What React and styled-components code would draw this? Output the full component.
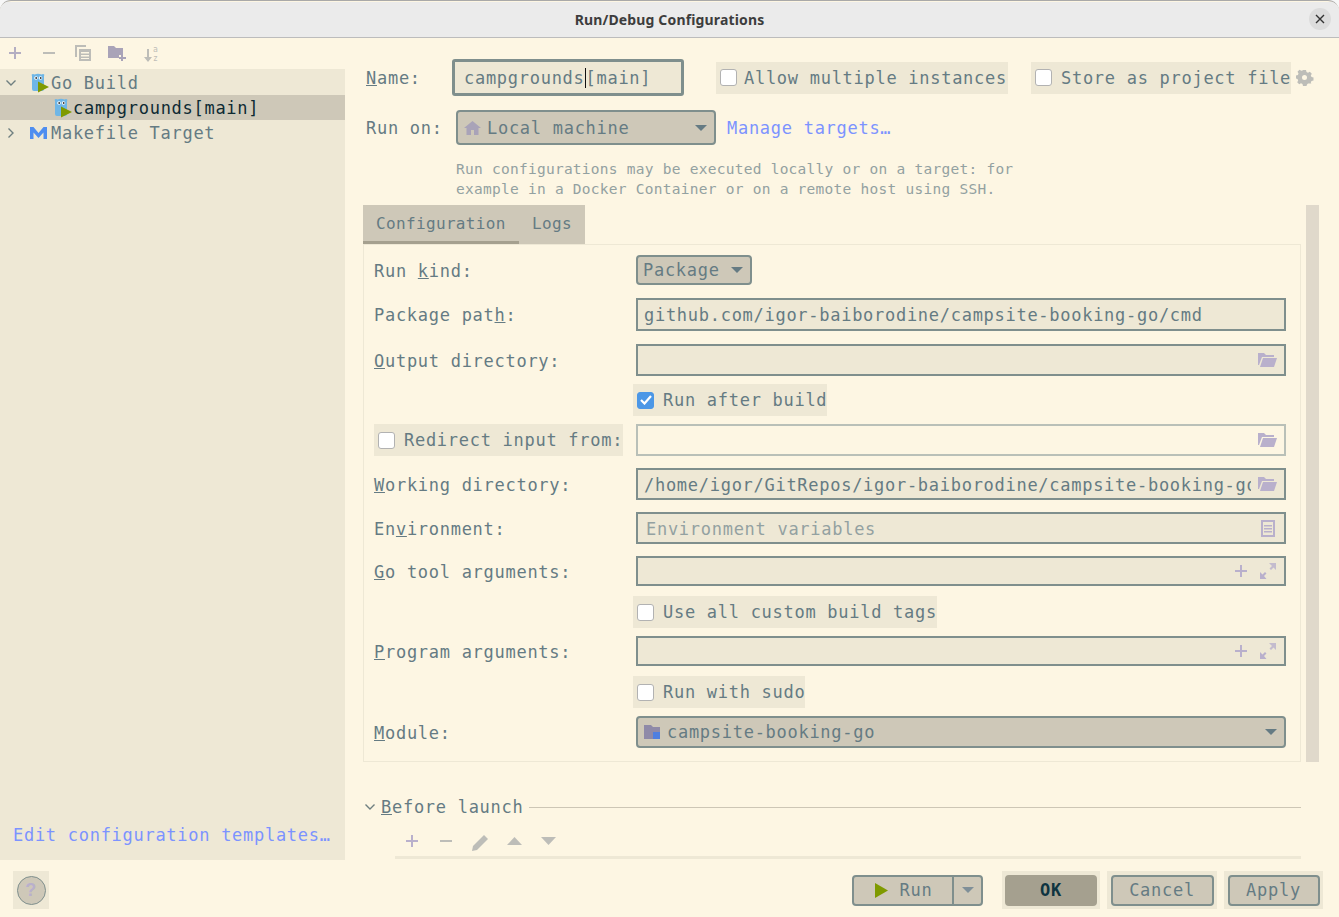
import styled, { createGlobalStyle } from "styled-components";

const BASE = "#fdf6e3";
const ALT = "#eee8d5";
const PICK = "#cec8b8";
const TEXT = "#657b83";
const EDGE = "#7f8f8d";
const LINK = "#7c93ff";
const ICON = "#b9b0cc";
const GREY = "#bdbdb8";

const Global = createGlobalStyle`
  html, body { margin: 0; padding: 0; height: 100%; overflow: hidden; background: #f7f7f7; }
  * { box-sizing: border-box; }
  #root { height: 100%; }
`;

const Window = styled.div`
  width: 1339px;
  height: 917px;
  padding-top: 1px;
  display: flex;
  flex-direction: column;
  font-family: "DejaVu Sans Mono", "Liberation Mono", monospace;
  font-size: 17px;
  letter-spacing: 0.72px;
  color: ${TEXT};
  background: ${BASE};
  border-radius: 11px 11px 0 0;
  overflow: hidden;
  border-top: 1px solid #a9a9a9;
`;

const TitleBar = styled.header`
  flex: 0 0 36px;
  display: flex;
  align-items: center;
  justify-content: center;
  position: relative;
  background: #ebebeb;
  border-bottom: 1px solid #bcbcbc;
  font: bold 14px "Noto Sans", sans-serif;
  letter-spacing: 0.15px;
  color: #3d3d3d;
`;

const CloseButton = styled.button`
  position: absolute;
  right: 8px;
  top: 6px;
  width: 22px;
  height: 22px;
  padding: 0;
  border: 0;
  border-radius: 50%;
  background: #dcdcdc;
  display: flex;
  align-items: center;
  justify-content: center;
`;

const Body = styled.div`
  flex: 1;
  display: flex;
  min-height: 0;
`;

const Sidebar = styled.aside`
  flex: 0 0 345px;
  display: flex;
  flex-direction: column;
`;

const SideTools = styled.div`
  flex: 0 0 31px;
  display: flex;
  align-items: center;
  margin-left: -2px;
  padding-bottom: 1px;
`;

const IconSlot = styled.span`
  flex: 0 0 34px;
  display: flex;
  align-items: center;
  justify-content: center;
  padding-top: ${(p) => p.$top || 0}px;
`;

const Tree = styled.div`
  flex: 1;
  background: ${ALT};
  display: flex;
  flex-direction: column;
  padding-top: 1px;
`;

const TreeRow = styled.div`
  height: 25px;
  display: flex;
  align-items: center;
  padding-left: ${(p) => p.$indent}px;
  background: ${(p) => (p.$selected ? PICK : "transparent")};
  color: ${(p) => (p.$selected ? "#0d2a33" : TEXT)};
  font-weight: ${(p) => (p.$selected ? 400 : 500)};
  white-space: nowrap;
`;

const TreeGap = styled.span`
  display: inline-flex;
  margin-left: ${(p) => p.$left || 0}px;
  margin-right: ${(p) => p.$right || 0}px;
`;

const TemplatesLink = styled.a`
  margin: auto 0 15px 13px;
  color: ${LINK};
`;

const Main = styled.main`
  flex: 1;
  min-width: 0;
  padding: 21px 0 0 18px;
  display: flex;
  flex-direction: column;
`;

const HeadRow = styled.div`
  display: flex;
  align-items: center;
  height: ${(p) => p.$h}px;
  margin-top: ${(p) => p.$mt || 0}px;
`;

const HeadLabel = styled.label`
  flex: 0 0 ${(p) => p.$w}px;
  padding-left: 3px;
  white-space: nowrap;
`;

const NameField = styled.div`
  width: 232px;
  height: 37px;
  margin-left: -1px;
  border: 3px solid ${EDGE};
  border-radius: 3px;
  background: ${ALT};
  display: flex;
  align-items: center;
  padding-left: 9px;
  white-space: nowrap;
`;

const Caret = styled.span`
  display: inline-block;
  width: 0;
  height: 20px;
  border-left: 1px solid #111;
  vertical-align: middle;
`;

const CheckWrap = styled.label`
  display: flex;
  align-items: center;
  height: ${(p) => p.$h || 32}px;
  width: ${(p) => p.$w}px;
  margin-left: ${(p) => p.$ml || 0}px;
  padding-left: 4px;
  flex: 0 0 auto;
  background: ${ALT};
  white-space: nowrap;
`;

const Box = styled.span`
  flex: 0 0 17px;
  width: 17px;
  height: 17px;
  margin-right: ${(p) => p.$gap || 9}px;
  border-radius: 3px;
  display: flex;
  align-items: center;
  justify-content: center;
  background: ${(p) => (p.$on ? "#4c97e6" : "#fff")};
  border: 1px solid ${(p) => (p.$on ? "#4c97e6" : "#b2b2b2")};
`;

const ComboBox = styled.div`
  height: ${(p) => p.$h}px;
  width: ${(p) => p.$w};
  flex: ${(p) => (p.$w === "auto" ? 1 : "0 0 auto")};
  display: flex;
  align-items: center;
  padding: 0 7px 0 ${(p) => p.$pl || 6}px;
  background: ${PICK};
  border: 2px solid ${EDGE};
  border-radius: 4px;
  white-space: nowrap;
`;

const ComboText = styled.span`
  flex: 1;
  display: flex;
  align-items: center;
  gap: ${(p) => p.$gap || 0}px;
`;

const Arrow = styled.span`
  width: 0;
  height: 0;
  border-left: 6px solid transparent;
  border-right: 6px solid transparent;
  border-top: 6px solid ${(p) => p.$c || TEXT};
`;

const Link = styled.a`
  margin-left: 11px;
  color: ${LINK};
  white-space: nowrap;
`;

const Hint = styled.p`
  margin: 14px 0 6px 93px;
  font-size: 14.5px;
  letter-spacing: 0.26px;
  line-height: 20px;
  color: #93a1a1;
`;

const ConfigArea = styled.div`
  display: flex;
  align-items: stretch;
  height: 557px;
  padding-right: 20px;
`;

const ConfigColumn = styled.div`
  flex: 1;
  min-width: 0;
  display: flex;
  flex-direction: column;
`;

const Scrollbar = styled.div`
  flex: 0 0 13px;
  margin-left: 5px;
  background: #e0d9cb;
`;

const TabBar = styled.div`
  display: flex;
  flex: 0 0 39px;
  width: 222px;
  background: ${PICK};
`;

const Tab = styled.div`
  padding: 0 13px;
  width: ${(p) => p.$w}px;
  display: flex;
  align-items: center;
  font-size: 16px;
  letter-spacing: 0.35px;
  border-bottom: 3px solid ${(p) => (p.$active ? "#a5a08f" : "transparent")};
`;

const Panel = styled.section`
  height: 518px;
  min-width: 0;
  border: 1px solid ${ALT};
  padding: 0 14px 0 10px;
`;

const FormRow = styled.div`
  display: flex;
  align-items: center;
  margin-top: ${(p) => p.$mt}px;
  height: ${(p) => p.$h}px;
`;

const FieldLabel = styled.label`
  flex: 0 0 262px;
  padding-top: 1px;
  white-space: nowrap;
`;

const Field = styled.div`
  flex: 1;
  height: ${(p) => p.$h || 32}px;
  min-width: 0;
  margin-left: ${(p) => p.$ml || 0}px;
  display: flex;
  align-items: center;
  gap: ${(p) => p.$gap || 12}px;
  padding: 0 ${(p) => p.$pr || 8}px 0 6px;
  background: ${(p) => (p.$off ? BASE : ALT)};
  border: 2px solid ${(p) => (p.$off ? "#b9c0b8" : EDGE)};
  white-space: nowrap;
`;

const FieldText = styled.span`
  flex: 1;
  min-width: 0;
  overflow: hidden;
  padding-top: 1px;
  padding-left: ${(p) => p.$pl || 0}px;
  color: ${(p) => (p.$muted ? "#93a1a1" : TEXT)};
`;

const Before = styled.div`
  display: flex;
  align-items: center;
  margin: 34px 38px 0 0;
  height: 22px;
`;

const BeforeRule = styled.span`
  flex: 1;
  height: 1px;
  margin-left: 6px;
  background: #cdc6b5;
`;

const BeforeTools = styled.div`
  margin: 10px 38px 0 32px;
  height: 31px;
  padding-top: 6px;
  display: flex;
  align-items: flex-start;
  border-bottom: 3px solid ${ALT};
`;

const Footer = styled.footer`
  flex: 0 0 57px;
  display: flex;
  align-items: center;
  padding: 3px 16px 0 13px;
`;

const HelpWrap = styled.div`
  width: 36px;
  height: 38px;
  background: ${ALT};
  display: flex;
  align-items: center;
  justify-content: center;
  margin-right: auto;
`;

const Help = styled.span`
  width: 29px;
  height: 29px;
  border-radius: 50%;
  border: 1px solid ${EDGE};
  background: ${PICK};
  color: ${ICON};
  display: flex;
  align-items: center;
  justify-content: center;
  font: bold 18px "Liberation Sans", sans-serif;
`;

const SplitButton = styled.div`
  display: flex;
  width: 131px;
  height: 31px;
  margin-right: 19px;
  border: 2px solid ${EDGE};
  border-radius: 4px;
  background: ${PICK};
`;

const SplitMain = styled.span`
  flex: 1;
  display: flex;
  align-items: center;
  justify-content: center;
  gap: 12px;
  border-right: 2px solid ${EDGE};
`;

const SplitSide = styled.span`
  flex: 0 0 27px;
  display: flex;
  align-items: center;
  justify-content: center;
`;

const ButtonWrap = styled.div`
  height: 38px;
  width: ${(p) => p.$w}px;
  margin-left: ${(p) => p.$ml || 0}px;
  background: ${ALT};
  display: flex;
  align-items: center;
  justify-content: center;
`;

const Button = styled.button`
  width: ${(p) => p.$w}px;
  height: 31px;
  padding: 0;
  font: inherit;
  letter-spacing: inherit;
  font-weight: ${(p) => (p.$primary ? 700 : 400)};
  color: ${(p) => (p.$primary ? "#0e3440" : TEXT)};
  background: ${(p) => (p.$primary ? "#a5a08f" : PICK)};
  border: 2px solid ${(p) => (p.$primary ? "#a5a08f" : EDGE)};
  border-radius: 4px;
`;

const Gopher = () => (
  <svg width="18" height="20" viewBox="0 0 18 20">
    <path d="M1 3 Q0 1 2 1 L3.500 1.600 Q7 0 10.500 1.600 L12 1 Q14 1 13 3 V16 Q13 18 11 18 H3 Q1 18 1 16Z" fill="#6fb6e6" />
    <circle cx="5" cy="5" r="1.800" fill="#fff" />
    <circle cx="9.500" cy="5" r="1.800" fill="#fff" />
    <circle cx="5.200" cy="5" r=".9" fill="#333" />
    <circle cx="9.700" cy="5" r=".9" fill="#333" />
    <path d="M7 8.500 L18 14 L7 19.500Z" fill="#7f9a00" />
  </svg>
);

const MakeIcon = () => (
  <svg width="17" height="14" viewBox="0 0 17 14">
    <path d="M0 13V1h3.500l5 6 5-6H17v12h-3.500V6.500L8.500 12 3.500 6.500V13Z" fill="#4f8ef0" />
  </svg>
);

const Chevron = ({ open }) => (
  <svg width="12" height="12" viewBox="0 0 12 12" fill="none" stroke="#6f7f80" strokeWidth="1.400">
    <path d={open ? "M1.500 3.500 6 8l4.500-4.500" : "M3.500 1.500 8 6l-4.500 4.500"} />
  </svg>
);

const PlusIcon = ({ c = ICON, size = 14 }) => (
  <svg width={size} height={size} viewBox="0 0 14 14" fill={c}>
    <path d="M6 1h2v5h5v2H8v5H6V8H1V6h5Z" />
  </svg>
);

const MinusIcon = ({ c = GREY }) => (
  <svg width="14" height="14" viewBox="0 0 14 14" fill={c}>
    <path d="M1 6h12v2H1Z" />
  </svg>
);

const CopyIcon = () => (
  <svg width="16" height="16" viewBox="0 0 16 16" fill={GREY}>
    <path d="M0 0h11v2H2v10H0Z" />
    <path d="M4 4h12v12H4Zm2 3v1.500h8V7Zm0 3v1.500h8V10Zm0 3v1h8v-1Z" fillRule="evenodd" />
  </svg>
);

const FolderPlus = () => (
  <svg width="18" height="16" viewBox="0 0 18 16" fill="#a9a3b8">
    <path d="M0 1h6l2 2h7v7h-4v3H0Z" />
    <path d="M13 9h2v3h3v2h-3v2h-2v-2h-2v-2h2Z" />
  </svg>
);

const SortIcon = () => (
  <svg width="17" height="17" viewBox="0 0 17 17" fill={GREY}>
    <path d="M4 4h2v8h3l-4 5-4-5h3Z" />
    <text x="10" y="7" fontSize="8" fontFamily="DejaVu Sans Mono" letterSpacing="0">a</text>
    <text x="10" y="16" fontSize="8" fontFamily="DejaVu Sans Mono" letterSpacing="0">z</text>
  </svg>
);

const Gear = () => (
  <svg width="18" height="18" viewBox="0 0 18 18" fill={GREY}>
    <path
      fillRule="evenodd"
      d="M7 1h3l.5 2 1.500.7 1.800-1 2 2-1 1.800.7 1.500 2 .5v3l-2 .5-.7 1.500.5 1H12l-1 1-.500 1.500H7l-.5-2-1.500-.7-1.800 1-2-2 1-1.800L1.500 10l-1.500-.5v-3l2-.5.500-1.500-1-1.800 2-2 1.800 1L6.500 1.500ZM8.500 6a2.500 2.500 0 1 0 0 5 2.500 2.500 0 0 0 0-5Z"
    />
  </svg>
);

const HomeIcon = () => (
  <svg width="17" height="14" viewBox="0 0 17 14" fill="#a9a3b8">
    <path d="M8.500 0 17 7h-2.500v7H10V9H7v5H2.500V7H0Z" />
  </svg>
);

const FolderOpen = () => (
  <svg width="19" height="14" viewBox="0 0 19 14" fill={ICON}>
    <path d="M0 0h6l2 2h8v2H4L1 12H0Z" />
    <path d="M5 5h14l-3 9H2Z" />
  </svg>
);

const DocIcon = () => (
  <svg width="14" height="17" viewBox="0 0 14 17" fill={ICON}>
    <path fillRule="evenodd" d="M0 0h14v17H0Zm2 2v13h10V2Zm1 3h8v1.500H3Zm0 3h8v1.500H3Zm0 3h8v1.500H3Z" />
  </svg>
);

const ExpandIcon = () => (
  <svg width="16" height="16" viewBox="0 0 16 16" fill={ICON}>
    <path d="M9 0h7v7l-2.500-2.500L11 7 9.500 5.500 12 3Z" opacity=".8" />
    <path d="M0 16V9l2.500 2.500L5 9l1.500 1.500L4 13l2.500 3Z" />
  </svg>
);

const ModuleIcon = () => (
  <svg width="19" height="16" viewBox="0 0 19 16">
    <path d="M0 1h7l2 2h7v12H0Z" fill="#8f8aa8" />
    <path d="M9 8h7v7H9Z" fill="#4f7fe0" />
  </svg>
);

const PencilIcon = () => (
  <svg width="18" height="18" viewBox="0 0 18 18" fill={GREY}>
    <path d="M13 1l4 4L6 16l-5 1 1-5Z" />
  </svg>
);

const Triangle = ({ up }) => (
  <svg width="15" height="8" viewBox="0 0 15 8" fill={GREY}>
    <path d={up ? "M7.500 0 15 8H0Z" : "M0 0h15L7.500 8Z"} />
  </svg>
);

const App = () => (
  <>
    <Global />
    <Window>
      <TitleBar>
        Run/Debug Configurations
        <CloseButton aria-label="Close">
          <svg width="10" height="10" viewBox="0 0 10 10" stroke="#333" strokeWidth="1.400">
            <path d="M1 1l8 8M9 1 1 9" />
          </svg>
        </CloseButton>
      </TitleBar>
      <Body>
        <Sidebar>
          <SideTools>
            <IconSlot><PlusIcon c="#b4aec2" /></IconSlot>
            <IconSlot><MinusIcon /></IconSlot>
            <IconSlot><CopyIcon /></IconSlot>
            <IconSlot><FolderPlus /></IconSlot>
            <IconSlot><SortIcon /></IconSlot>
          </SideTools>
          <Tree>
            <TreeRow $indent={5}>
              <TreeGap $right={14}><Chevron open /></TreeGap>
              <TreeGap $right={2}><Gopher /></TreeGap>
              Go Build
            </TreeRow>
            <TreeRow $indent={54} $selected>
              <TreeGap $right={1}><Gopher /></TreeGap>
              campgrounds[main]
            </TreeRow>
            <TreeRow $indent={5}>
              <TreeGap $right={13}><Chevron /></TreeGap>
              <TreeGap $right={4}><MakeIcon /></TreeGap>
              Makefile Target
            </TreeRow>
            <TemplatesLink>Edit configuration templates…</TemplatesLink>
          </Tree>
        </Sidebar>

        <Main>
          <HeadRow $h={37}>
            <HeadLabel $w={90}><u>N</u>ame:</HeadLabel>
            <NameField>
              campgrounds<Caret />[main]
            </NameField>
            <CheckWrap $w={292} $ml={32}>
              <Box $gap={7} />
              Allow multiple instances
            </CheckWrap>
            <CheckWrap $w={260} $ml={23}>
              <Box />
              Store as project file
            </CheckWrap>
            <TreeGap $left={5}><Gear /></TreeGap>
          </HeadRow>
          <HeadRow $h={35} $mt={14}>
            <HeadLabel $w={93}>Run on:</HeadLabel>
            <ComboBox $h={35} $w="260px" $pl={6}>
              <ComboText $gap={6}><HomeIcon />Local machine</ComboText>
              <Arrow />
            </ComboBox>
            <Link>Manage targets…</Link>
          </HeadRow>
          <Hint>
            Run configurations may be executed locally or on a target: for
            <br />
            example in a Docker Container or on a remote host using SSH.
          </Hint>

          <ConfigArea>
            <ConfigColumn>
              <TabBar>
                <Tab $w={156} $active>Configuration</Tab>
                <Tab $w={66}>Logs</Tab>
              </TabBar>
              <Panel>
                <FormRow $h={30} $mt={10}>
                  <FieldLabel>Run <u>k</u>ind:</FieldLabel>
                  <ComboBox $h={30} $w="116px" $pl={5}>
                    <ComboText>Package</ComboText>
                    <Arrow />
                  </ComboBox>
                </FormRow>
                <FormRow $h={33} $mt={13}>
                  <FieldLabel>Package pat<u>h</u>:</FieldLabel>
                  <Field $h={33}><FieldText>github.com/igor-baiborodine/campsite-booking-go/cmd</FieldText></Field>
                </FormRow>
                <FormRow $h={32} $mt={13}>
                  <FieldLabel><u>O</u>utput directory:</FieldLabel>
                  <Field $pr={7}><FieldText /><FolderOpen /></Field>
                </FormRow>
                <FormRow $h={32} $mt={8}>
                  <CheckWrap $w={194} $ml={259}>
                    <Box $on>
                      <svg width="12" height="10" viewBox="0 0 12 10" fill="none" stroke="#fff" strokeWidth="2.200">
                        <path d="M1 5l3.500 3.500L11 1" />
                      </svg>
                    </Box>
                    Run after build
                  </CheckWrap>
                </FormRow>
                <FormRow $h={32} $mt={8}>
                  <CheckWrap $w={249}>
                    <Box />
                    Redirect input from:
                  </CheckWrap>
                  <Field $off $ml={13} $pr={7}><FieldText /><FolderOpen /></Field>
                </FormRow>
                <FormRow $h={32} $mt={12}>
                  <FieldLabel><u>W</u>orking directory:</FieldLabel>
                  <Field $pr={7} $gap={7}><FieldText>/home/igor/GitRepos/igor-baiborodine/campsite-booking-go</FieldText><FolderOpen /></Field>
                </FormRow>
                <FormRow $h={32} $mt={12}>
                  <FieldLabel>En<u>v</u>ironment:</FieldLabel>
                  <Field $pr={9}><FieldText $muted $pl={2}>Environment variables</FieldText><DocIcon /></Field>
                </FormRow>
                <FormRow $h={30} $mt={12}>
                  <FieldLabel><u>G</u>o tool arguments:</FieldLabel>
                  <Field $h={30}><FieldText /><PlusIcon /><ExpandIcon /></Field>
                </FormRow>
                <FormRow $h={32} $mt={10}>
                  <CheckWrap $w={304} $ml={259}>
                    <Box />
                    Use all custom build tags
                  </CheckWrap>
                </FormRow>
                <FormRow $h={30} $mt={8}>
                  <FieldLabel><u>P</u>rogram arguments:</FieldLabel>
                  <Field $h={30}><FieldText /><PlusIcon /><ExpandIcon /></Field>
                </FormRow>
                <FormRow $h={32} $mt={10}>
                  <CheckWrap $w={172} $ml={259}>
                    <Box />
                    Run with sudo
                  </CheckWrap>
                </FormRow>
                <FormRow $h={32} $mt={8}>
                  <FieldLabel><u>M</u>odule:</FieldLabel>
                  <ComboBox $h={32} $w="auto" $pl={6}>
                    <ComboText $gap={4}><ModuleIcon />campsite-booking-go</ComboText>
                    <Arrow />
                  </ComboBox>
                </FormRow>
              </Panel>
            </ConfigColumn>
            <Scrollbar />
          </ConfigArea>

          <Before>
            <TreeGap $left={1} $right={5}><Chevron open /></TreeGap>
            <span><u>B</u>efore launch</span>
            <BeforeRule />
          </Before>
          <BeforeTools>
            <IconSlot><PlusIcon /></IconSlot>
            <IconSlot><MinusIcon /></IconSlot>
            <IconSlot><PencilIcon /></IconSlot>
            <IconSlot $top={3}><Triangle up /></IconSlot>
            <IconSlot $top={3}><Triangle /></IconSlot>
          </BeforeTools>
        </Main>
      </Body>
      <Footer>
        <HelpWrap><Help>?</Help></HelpWrap>
        <SplitButton>
          <SplitMain>
            <svg width="14" height="15" viewBox="0 0 14 15"><path d="M1 0l13 7.500L1 15Z" fill="#7f9a00" /></svg>
            Run
          </SplitMain>
          <SplitSide><Arrow $c="#7f8f98" /></SplitSide>
        </SplitButton>
        <ButtonWrap $w={98}><Button $primary $w={92}>OK</Button></ButtonWrap>
        <ButtonWrap $w={110} $ml={7}><Button $w={103}>Cancel</Button></ButtonWrap>
        <ButtonWrap $w={99} $ml={7}><Button $w={92}>Apply</Button></ButtonWrap>
      </Footer>
    </Window>
  </>
);

export default App;
